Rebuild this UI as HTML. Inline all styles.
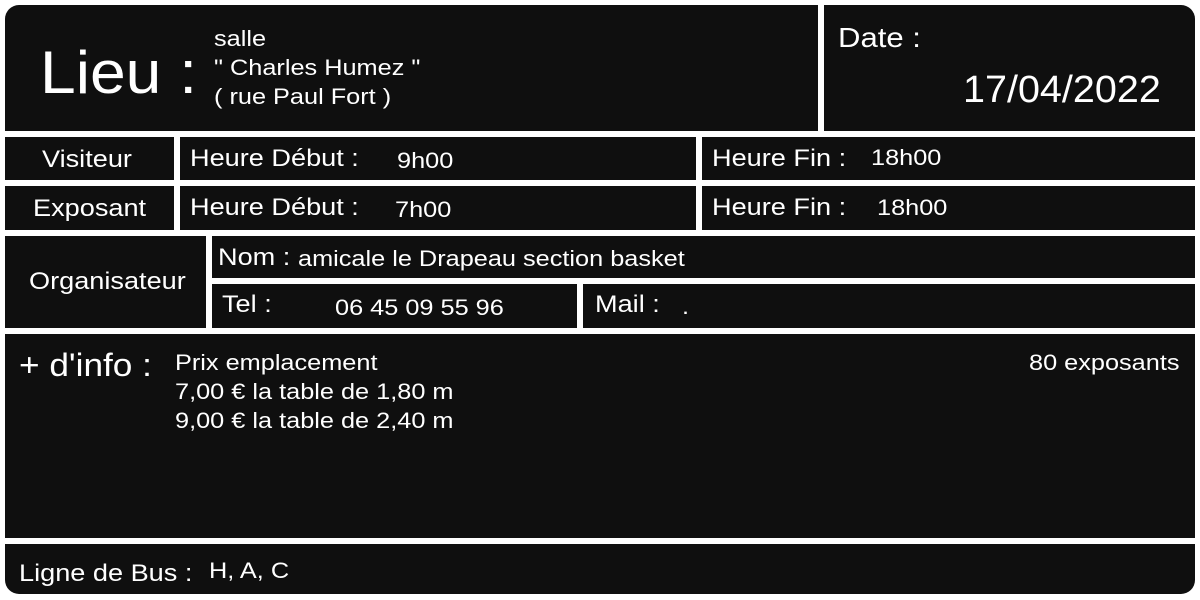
<!DOCTYPE html>
<html><head><meta charset="utf-8"><style>
body{margin:0;width:1200px;height:600px;background:#fff;position:relative;overflow:hidden;font-family:"Liberation Sans",sans-serif;color:#fff}
.b{position:absolute;background:#0f0f0f}
.t{position:absolute;white-space:nowrap;line-height:1;transform-origin:0 0}
.s{font-size:22px;transform:scaleX(1.15)}
.m{font-size:24px;transform:scaleX(1.13)}
</style></head><body>
<div class="b" style="left:5px;top:5px;width:813px;height:126px;border-top-left-radius:14px"></div>
<div class="b" style="left:824px;top:5px;width:371px;height:126px;border-top-right-radius:14px"></div>
<div class="b" style="left:5px;top:137px;width:169px;height:43px"></div>
<div class="b" style="left:180px;top:137px;width:516px;height:43px"></div>
<div class="b" style="left:702px;top:137px;width:493px;height:43px"></div>
<div class="b" style="left:5px;top:186px;width:169px;height:44px"></div>
<div class="b" style="left:180px;top:186px;width:516px;height:44px"></div>
<div class="b" style="left:702px;top:186px;width:493px;height:44px"></div>
<div class="b" style="left:5px;top:236px;width:201px;height:92px"></div>
<div class="b" style="left:212px;top:236px;width:983px;height:42px"></div>
<div class="b" style="left:212px;top:284px;width:365px;height:44px"></div>
<div class="b" style="left:583px;top:284px;width:612px;height:44px"></div>
<div class="b" style="left:5px;top:334px;width:1190px;height:204px"></div>
<div class="b" style="left:5px;top:544px;width:1190px;height:50px;border-bottom-right-radius:14px;border-bottom-left-radius:14px"></div>

<div class="t" style="left:40px;top:43px;font-size:60px;transform:scaleX(1.07)">Lieu :</div>
<div class="t s" style="left:214px;top:28px">salle</div>
<div class="t s" style="left:214px;top:57px">" Charles Humez "</div>
<div class="t s" style="left:214px;top:86px">( rue Paul Fort )</div>
<div class="t" style="left:838px;top:24px;font-size:28px;transform:scaleX(1.11)">Date :</div>
<div class="t" style="left:963px;top:71px;font-size:38px;transform:scaleX(1.04)">17/04/2022</div>

<div class="t m" style="left:42px;top:148px">Visiteur</div>
<div class="t m" style="left:190px;top:147px">Heure Début :</div>
<div class="t s" style="left:397px;top:150px">9h00</div>
<div class="t m" style="left:712px;top:147px">Heure Fin :</div>
<div class="t s" style="left:871px;top:147px">18h00</div>

<div class="t m" style="left:33px;top:197px">Exposant</div>
<div class="t m" style="left:190px;top:196px">Heure Début :</div>
<div class="t s" style="left:395px;top:199px">7h00</div>
<div class="t m" style="left:712px;top:196px">Heure Fin :</div>
<div class="t s" style="left:877px;top:197px">18h00</div>

<div class="t m" style="left:29px;top:270px">Organisateur</div>
<div class="t m" style="left:218px;top:246px">Nom :</div>
<div class="t s" style="left:298px;top:248px">amicale le Drapeau section basket</div>
<div class="t m" style="left:222px;top:293px">Tel :</div>
<div class="t s" style="left:335px;top:297px">06 45 09 55 96</div>
<div class="t m" style="left:595px;top:293px">Mail :</div>
<div class="t s" style="left:682px;top:296px">.</div>

<div class="t" style="left:19px;top:349px;font-size:32px;transform:scaleX(1.1)">+ d'info :</div>
<div class="t s" style="left:175px;top:352px">Prix emplacement</div>
<div class="t s" style="left:175px;top:381px">7,00 € la table de 1,80 m</div>
<div class="t s" style="left:175px;top:410px">9,00 € la table de 2,40 m</div>
<div class="t s" style="left:1029px;top:352px">80 exposants</div>

<div class="t m" style="left:19px;top:562px">Ligne de Bus :</div>
<div class="t s" style="left:209px;top:560px">H, A, C</div>
</body></html>
